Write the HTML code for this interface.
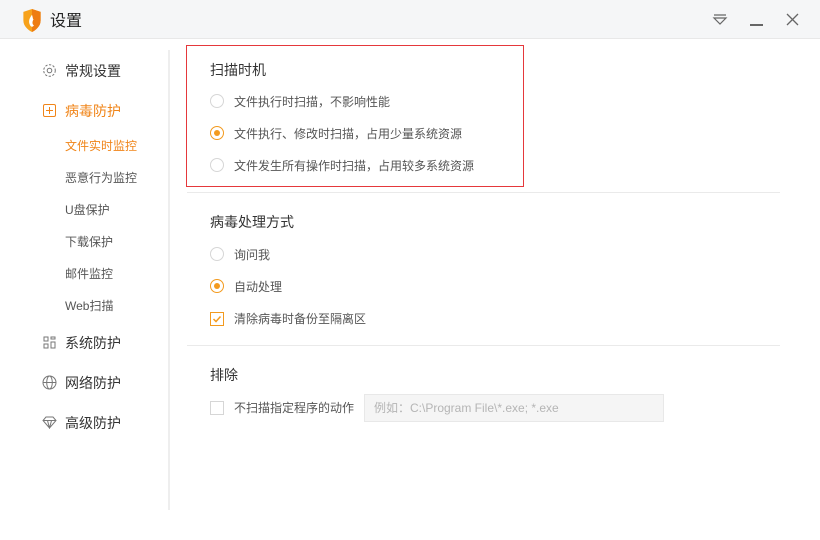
<!DOCTYPE html>
<html><head><meta charset="utf-8"><style>
*{margin:0;padding:0;box-sizing:border-box}
body{width:820px;height:540px;background:#fff;font-family:"Liberation Sans","Noto Sans CJK SC",sans-serif;position:relative;overflow:hidden;color:#333}
.a{position:absolute;white-space:nowrap;line-height:1.2}
.tb{left:0;top:0;width:820px;height:39px;background:#f5f6f7;border-bottom:1px solid #e8e8e8}
.nav{font-size:14px;color:#333}
.sub{font-size:12px;color:#555}
.h{font-size:14px;color:#333}
.t{font-size:12px;color:#555}
.r{width:14px;height:14px;border:1px solid #d6d6d6;border-radius:50%}
.rs{border-color:#f39a1e}
.rs::after{content:"";position:absolute;left:3px;top:3px;width:6px;height:6px;border-radius:50%;background:#f39a1e}
.cb{width:14px;height:14px;border:1px solid #d6d6d6}
</style></head><body>
<div class="a tb"></div>
<svg class="a" style="left:22px;top:9px" width="20" height="23" viewBox="0 0 20 24"><path d="M1 3 L10 0 L19 3 V12 C19 18 14 22 10 24 C6 22 1 18 1 12Z" fill="#f7a21b"/><path d="M10 0 L19 3 V12 C19 18 14 22 10 24Z" fill="#ee7d12"/><path d="M10 6 C7 10 6 13 8 17 C9 19 11 19 12 17 C10 16 10 13 12 10 C11 12 11 9 10 6Z" fill="#fff"/></svg>
<div class="a" style="left:50px;top:12px;font-size:16px;color:#222">设置</div>
<svg class="a" style="left:712px;top:13px" width="16" height="14" viewBox="0 0 16 14"><path d="M2 2H14M2 5H14L8 11Z" fill="none" stroke="#666" stroke-width="1.2"/></svg>
<div class="a" style="left:750px;top:24px;width:13px;height:1.5px;background:#666"></div>
<svg class="a" style="left:786px;top:13px" width="13" height="13" viewBox="0 0 13 13"><path d="M1 1L12 12M12 1L1 12" stroke="#666" stroke-width="1.3"/></svg>
<div class="a" style="left:168px;top:50px;width:2px;height:460px;background:#eee"></div>

<svg class="a" style="left:42px;top:63px" width="15" height="15" viewBox="0 0 15 15"><circle cx="7.5" cy="7.5" r="2.3" fill="none" stroke="#777"/><circle cx="7.5" cy="7.5" r="5.8" fill="none" stroke="#777" stroke-dasharray="2.3 1.5"/></svg>
<div class="a nav" style="left:65px;top:63px">常规设置</div>
<div class="a" style="left:43px;top:104px;width:13px;height:13px;border:1.2px solid #f08519;border-radius:2px"></div>
<div class="a" style="left:46px;top:110px;width:7px;height:1.2px;background:#f08519"></div>
<div class="a" style="left:49px;top:107px;width:1.2px;height:7px;background:#f08519"></div>
<div class="a nav" style="left:65px;top:103px;color:#f08519">病毒防护</div>
<div class="a sub" style="left:65px;top:139px;color:#f08519">文件实时监控</div>
<div class="a sub" style="left:65px;top:171px">恶意行为监控</div>
<div class="a sub" style="left:65px;top:203px">U盘保护</div>
<div class="a sub" style="left:65px;top:235px">下载保护</div>
<div class="a sub" style="left:65px;top:267px">邮件监控</div>
<div class="a sub" style="left:65px;top:299px">Web扫描</div>
<svg class="a" style="left:43px;top:336px" width="13" height="13" viewBox="0 0 13 13"><path d="M1 1h4v4h-4zM1 8h4v4h-4zM8 6h4v6h-4zM8 1h4v2h-4z" fill="none" stroke="#777"/></svg>
<div class="a nav" style="left:65px;top:335px">系统防护</div>
<svg class="a" style="left:42px;top:375px" width="15" height="15" viewBox="0 0 15 15"><circle cx="7.5" cy="7.5" r="6.5" fill="none" stroke="#777"/><ellipse cx="7.5" cy="7.5" rx="2.8" ry="6.5" fill="none" stroke="#777"/><path d="M1 7.5H14" stroke="#777"/></svg>
<div class="a nav" style="left:65px;top:375px">网络防护</div>
<svg class="a" style="left:42px;top:416px" width="15" height="13" viewBox="0 0 15 13"><path d="M4 1H11L14 4.5L7.5 12L1 4.5ZM1 4.5H14M5.5 4.5L7.5 12L9.5 4.5" fill="none" stroke="#777"/></svg>
<div class="a nav" style="left:65px;top:415px">高级防护</div>

<div class="a" style="left:186px;top:45px;width:338px;height:142px;border:1px solid #e5383b"></div>
<div class="a h" style="left:210px;top:62px">扫描时机</div>
<div class="a r" style="left:210px;top:94px"></div><div class="a t" style="left:234px;top:95px">文件执行时扫描，不影响性能</div>
<div class="a r rs" style="left:210px;top:126px"></div><div class="a t" style="left:234px;top:127px">文件执行、修改时扫描，占用少量系统资源</div>
<div class="a r" style="left:210px;top:158px"></div><div class="a t" style="left:234px;top:159px">文件发生所有操作时扫描，占用较多系统资源</div>
<div class="a" style="left:187px;top:192px;width:593px;height:1px;background:#eaeaea"></div>
<div class="a h" style="left:210px;top:214px">病毒处理方式</div>
<div class="a r" style="left:210px;top:247px"></div><div class="a t" style="left:234px;top:248px">询问我</div>
<div class="a r rs" style="left:210px;top:279px"></div><div class="a t" style="left:234px;top:280px">自动处理</div>
<div class="a cb" style="left:210px;top:312px;border-color:#f39a1e"></div>
<svg class="a" style="left:210px;top:312px" width="14" height="14"><path d="M3.5 7L6 9.5L10.5 4.5" fill="none" stroke="#f39a1e" stroke-width="1.5"/></svg>
<div class="a t" style="left:234px;top:312px">清除病毒时备份至隔离区</div>
<div class="a" style="left:187px;top:345px;width:593px;height:1px;background:#eaeaea"></div>
<div class="a h" style="left:210px;top:367px">排除</div>
<div class="a cb" style="left:210px;top:401px"></div>
<div class="a t" style="left:234px;top:401px">不扫描指定程序的动作</div>
<div class="a" style="left:364px;top:394px;width:300px;height:28px;background:#f5f5f5;border:1px solid #e8e8e8"></div>
<div class="a" style="left:374px;top:401px;font-size:12px;color:#b5b5b5">例如：C:\Program File\*.exe; *.exe</div>
</body></html>
